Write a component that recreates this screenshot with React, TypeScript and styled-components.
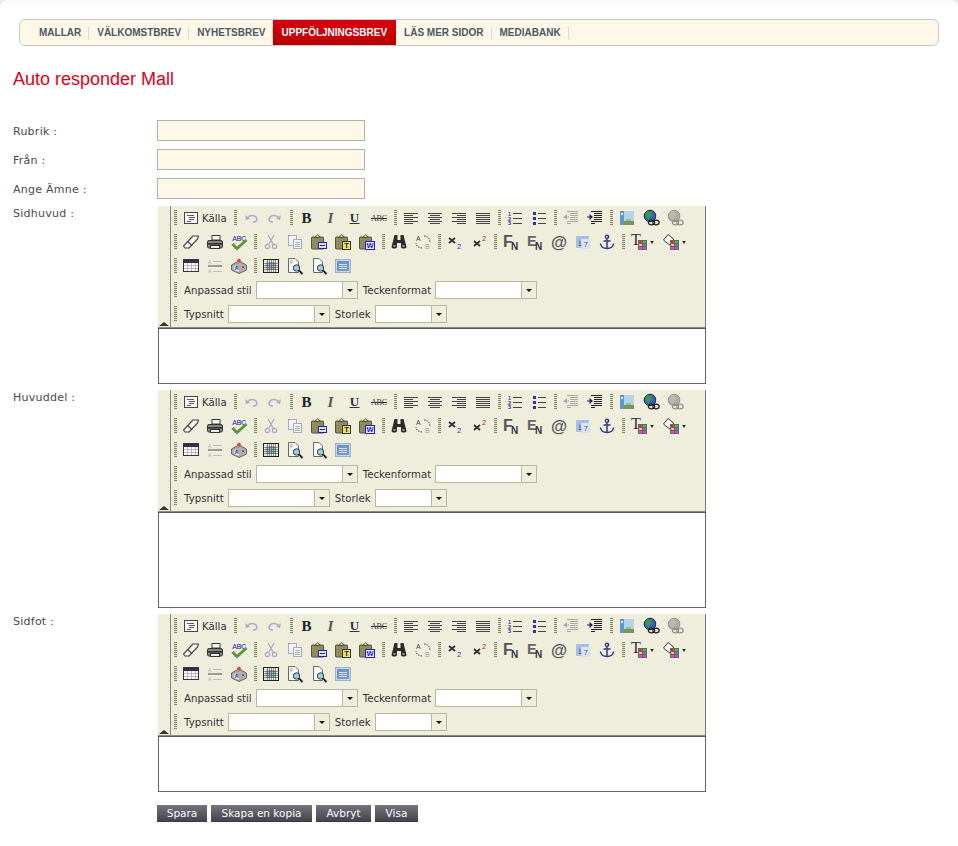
import React from "react";
import styled, { createGlobalStyle } from "styled-components";

const Global = createGlobalStyle`
  html { background: #e6e6e6; }
  body { margin: 0; font-family: "DejaVu Sans", Verdana, sans-serif; }
`;

const Page = styled.div`
  min-height: 846px;
  box-sizing: border-box;
  padding: 19px 19px 0 0;
  border-radius: 6px 6px 0 0;
  background: linear-gradient(#f9f9f9 0, #fbfbfb 5px, #fff 7px);
`;
const Nav = styled.nav`
  margin-left: 19px;
  height: 27px;
  box-sizing: border-box;
  display: flex;
  align-items: stretch;
  padding-left: 11px;
  background: #fff7e8;
  border: 1px solid #c3cbc9;
  border-radius: 6px;
`;
const Tab = styled.a<{ $active?: boolean }>`
  display: flex;
  align-items: center;
  padding: ${(p) => (p.$active ? "0 9px 0 8px" : "0 7px 0 8px")};
  font: bold 10px/25px "Liberation Sans", Arial, sans-serif;
  color: ${(p) => (p.$active ? "#fff" : "#4b5866")};
  background: ${(p) => (p.$active ? "linear-gradient(#d80012, #b80000)" : "transparent")};
`;
const NavSep = styled.span`
  align-self: center;
  width: 1px;
  height: 12px;
  background: #d9d9cf;
`;
const Title = styled.h1`
  margin: 23px 0 30px 13px;
  font: normal 18px/21px "Liberation Sans", Arial, sans-serif;
  color: #e2001a;
`;
const Form = styled.div`
  display: grid;
  grid-template-columns: 144px 1fr;
  margin-left: 13px;
  width: 693px;
`;
const Label = styled.label<{ $top?: boolean; $mb: number }>`
  font-size: 11px;
  line-height: 21px;
  letter-spacing: 0.25px;
  color: #4a4a4a;
  margin-bottom: ${(p) => p.$mb}px;
  margin-top: ${(p) => (p.$top ? -3 : 1)}px;
`;
const Field = styled.div<{ $mb: number }>`
  margin-bottom: ${(p) => p.$mb}px;
  min-width: 0;
`;
const TextInput = styled.input`
  display: block;
  box-sizing: border-box;
  width: 208px;
  height: 21px;
  padding: 0 3px;
  background: #fff7e8;
  border: 1px solid #b4afa8;
  outline: none;
`;
const Editor = styled.div`
  margin-left: 1px;
  width: 548px;
`;
const ToolArea = styled.div`
  display: flex;
  height: 122px;
  box-sizing: border-box;
  background: #efeedd;
  border-right: 1px solid #777;
  border-bottom: 1px solid #8a8a80;
`;
const Collapser = styled.div`
  flex: none;
  width: 12px;
  margin-right: 1px;
  box-shadow: 1px 0 0 #85857c;
  display: flex;
  align-items: flex-end;
  justify-content: center;
  padding-bottom: 1px;
`;
const Triangle = styled.span`
  width: 0;
  height: 0;
  border-left: 5px solid transparent;
  border-right: 5px solid transparent;
  border-bottom: 4px solid #333;
`;
const Rows = styled.div`
  flex: 1;
  min-width: 0;
`;
const ToolRow = styled.div`
  display: flex;
  align-items: center;
  height: 24px;
`;
const Grip = styled.span`
  flex: none;
  width: 8px;
  height: 16px;
  display: flex;
  justify-content: center;
  &::before {
    content: "";
    width: 3px;
    height: 16px;
    background: repeating-linear-gradient(to bottom, #8b8a6c 0 1px, #e3e2c8 1px 2px);
  }
`;
const ToolButton = styled.span`
  flex: none;
  width: 24px;
  height: 24px;
  display: flex;
  align-items: center;
  justify-content: center;
  box-sizing: border-box;
`;
const SourceButton = styled.span`
  flex: none;
  width: 52px;
  height: 24px;
  display: flex;
  align-items: center;
  gap: 3px;
  padding-left: 4px;
  box-sizing: border-box;
  font-size: 10.2px;
  color: #333;
`;
const ComboButton = styled.span`
  flex: none;
  width: 32px;
  height: 24px;
  display: flex;
  align-items: center;
  padding-left: 4px;
  gap: 3px;
  box-sizing: border-box;
`;
const SmallArrow = styled.span`
  width: 0;
  height: 0;
  border-left: 2.5px solid transparent;
  border-right: 2.5px solid transparent;
  border-top: 3px solid #333;
`;
const ComboLabel = styled.span`
  flex: none;
  font-size: 10.2px;
  color: #333;
  padding: 0 4px 0 5px;
`;
const Select = styled.span<{ $w: number }>`
  flex: none;
  width: ${(p) => p.$w}px;
  height: 18px;
  box-sizing: border-box;
  display: flex;
  background: #fff;
  border: 1px solid #b8b7a0;
`;
const SelectValue = styled.span`
  flex: 1;
`;
const SelectArrow = styled.span`
  flex: none;
  width: 14px;
  background: #efeedd;
  border-left: 1px solid #b8b7a0;
  display: flex;
  align-items: center;
  justify-content: center;
  &::before {
    content: "";
    border-left: 3px solid transparent;
    border-right: 3px solid transparent;
    border-top: 3px solid #111;
  }
`;
const Content = styled.div<{ $h: number }>`
  height: ${(p) => p.$h}px;
  box-sizing: border-box;
  background: #fff;
  border: 1px solid #666;
  border-top-color: #555;
`;
const Actions = styled.div`
  display: flex;
  margin-top: 7px;
  grid-column: 2;
`;
const ActionButton = styled.button<{ $w: number; $mr: number }>`
  width: ${(p) => p.$w}px;
  margin-right: ${(p) => p.$mr}px;
  height: 17px;
  padding: 0;
  border: 0;
  border-bottom: 1px solid #3a3a40;
  background: linear-gradient(#74747e, #45454d);
  font: 10.5px/16px "DejaVu Sans", Verdana, sans-serif;
  color: #fafafa;
`;
const IconSvg = styled.svg`
  display: block;
  flex: none;
  overflow: visible;
`;

const TXT = { fontFamily: "Liberation Serif, serif" };
const SANS = { fontFamily: "Liberation Sans, sans-serif" };
const lines = (rows: [number, number, number][], c = "#444") =>
  rows.map(([x1, x2, y], i) => <line key={i} x1={x1} x2={x2} y1={y + 0.5} y2={y + 0.5} stroke={c} />);
const alignRows = (f: (i: number) => [number, number]) =>
  lines(
    Array.from({ length: 6 }, (_, i) => {
      const [a, b] = f(i);
      return [a, b, 3 + i * 2] as [number, number, number];
    }),
  );
const Palette = () => (
  <g shapeRendering="crispEdges">
    <rect x="7" y="6" width="9" height="10" fill="#666" />
    <rect x="8" y="7" width="3" height="2" fill="#e33" />
    <rect x="12" y="7" width="3" height="2" fill="#4b4" />
    <rect x="8" y="10" width="3" height="2" fill="#ec3" />
    <rect x="12" y="10" width="3" height="2" fill="#48d" />
    <rect x="8" y="13" width="3" height="2" fill="#e4c" />
    <rect x="12" y="13" width="3" height="2" fill="#d4d" />
  </g>
);
const Magnifier = () => (
  <g>
    <circle cx="9.5" cy="10" r="3.2" fill="#9fd0d8" stroke="#334" />
    <line x1="11.8" y1="12.2" x2="15.5" y2="16" stroke="#222" strokeWidth="1.8" />
  </g>
);
const Clipboard = () => (
  <g>
    <rect x="0.5" y="3" width="12" height="12" rx="1" fill="#8f8b5e" stroke="#55523a" />
    <path d="M3.5 3.5 L6.5 0.8 L9.5 3.5 Z" fill="#e8d870" stroke="#55523a" />
  </g>
);
const Globe = () => (
  <g>
    <circle cx="7" cy="6" r="5.8" fill="#2f62c8" stroke="#224" />
    <path d="M4 1.5 L8 1.5 L9 5 L6 8 L7 11 L4 8 L2 5 Z" fill="#3c9a3c" />
    <ellipse cx="8.5" cy="12.5" rx="3.2" ry="2.4" fill="none" stroke="#222" strokeWidth="1.2" />
    <ellipse cx="13" cy="12.5" rx="3.2" ry="2.4" fill="none" stroke="#222" strokeWidth="1.2" />
  </g>
);

const icons: Record<string, React.ReactNode> = {
  source: (
    <g shapeRendering="crispEdges">
      <rect x="1.5" y="2.5" width="13" height="11" fill="#fdfdf8" stroke="#444" />
      {lines([[4, 11, 5], [6, 12, 7], [6, 11, 9], [4, 8, 11]], "#555")}
    </g>
  ),
  undo: (
    <g fill="none" stroke="#a9afc6" strokeWidth="1.5">
      <path d="M4 8 C7 4 13 5 14 9 C14 11 12 12 10 12" />
      <path d="M2 5 L3 10 L7 9 Z" fill="#a9afc6" stroke="none" />
    </g>
  ),
  redo: (
    <g fill="none" stroke="#a9afc6" strokeWidth="1.5" transform="matrix(-1 0 0 1 16 0)">
      <path d="M4 8 C7 4 13 5 14 9 C14 11 12 12 10 12" />
      <path d="M2 5 L3 10 L7 9 Z" fill="#a9afc6" stroke="none" />
    </g>
  ),
  bold: <text x="7.5" y="13" textAnchor="middle" fontSize="15" fontWeight="bold" fill="#222" style={TXT}>B</text>,
  italic: <text x="7.5" y="13" textAnchor="middle" fontSize="15" fontWeight="bold" fontStyle="italic" fill="#555" style={TXT}>I</text>,
  underline: (
    <g>
      <text x="7.5" y="12" textAnchor="middle" fontSize="13" fontWeight="bold" fill="#333" style={TXT}>U</text>
      <rect x="2.5" y="13" width="10" height="1" fill="#333" />
    </g>
  ),
  strike: (
    <g>
      <text x="8" y="11" textAnchor="middle" fontSize="8" fill="#333" style={TXT} textLength="16">ABC</text>
      <rect x="0" y="8" width="16" height="1" fill="#333" />
    </g>
  ),
  left: <g shapeRendering="crispEdges">{alignRows((i) => [1, i % 2 ? 10 : 15])}</g>,
  center: <g shapeRendering="crispEdges">{alignRows((i) => (i % 2 ? [3, 13] : [1, 15]))}</g>,
  right: <g shapeRendering="crispEdges">{alignRows((i) => [i % 2 ? 6 : 1, 15])}</g>,
  justify: <g shapeRendering="crispEdges">{alignRows(() => [1, 15])}</g>,
  ol: (
    <g>
      <g fontSize="5.5" fill="#33a" fontWeight="bold" style={SANS}>
        <text x="1" y="6">1</text>
        <text x="1" y="10.5">2</text>
        <text x="1" y="15">3</text>
      </g>
      <g shapeRendering="crispEdges">{lines([[6, 15, 3], [6, 15, 8], [6, 15, 13]])}</g>
    </g>
  ),
  ul: (
    <g shapeRendering="crispEdges">
      <rect x="2" y="2" width="3" height="3" fill="#339" />
      <rect x="2" y="7" width="3" height="3" fill="#339" />
      <rect x="2" y="12" width="3" height="3" fill="#339" />
      {lines([[7, 15, 3], [7, 15, 8], [7, 15, 13]])}
    </g>
  ),
  outdent: (
    <g>
      <path d="M0 7 L4 4 L4 10 Z" fill="#a4aec8" />
      <rect x="3" y="6.5" width="3" height="1" fill="#a4aec8" />
      <g shapeRendering="crispEdges">
        {lines([[4, 15, 1], [7, 15, 3], [7, 15, 5], [7, 15, 7], [7, 15, 9], [4, 15, 11], [4, 8, 13]], "#aaa99a")}
      </g>
    </g>
  ),
  indent: (
    <g>
      <path d="M6 7 L2.5 4 L2.5 10 Z" fill="#226" />
      <rect x="0" y="6.5" width="4" height="1" fill="#226" />
      <g shapeRendering="crispEdges">
        {lines([[4, 15, 1], [7, 15, 3], [7, 15, 5], [7, 15, 7], [7, 15, 9], [4, 15, 11], [4, 8, 13]], "#222")}
      </g>
    </g>
  ),
  image: (
    <g shapeRendering="crispEdges">
      <rect x="1" y="1" width="14" height="14" fill="#b5d3e8" />
      <rect x="1" y="1" width="4" height="14" fill="#5e97c8" />
      <rect x="5" y="11" width="10" height="4" fill="#6e9a5a" />
      <rect x="7" y="9" width="5" height="2" fill="#9abb88" />
      <rect x="2" y="3" width="2" height="2" fill="#eef4f8" />
    </g>
  ),
  globe: <Globe />,
  globeGray: <g opacity="0.45" style={{ filter: "grayscale(1)" }}><Globe /></g>,
  eraser: (
    <g stroke="#444" strokeWidth="1.1" strokeLinejoin="round">
      <path d="M0.5 12 L10 2 L15.5 2 L14.5 5 L6 14 L2 14 Z" fill="#fbfbf5" />
      <path d="M5 8 L9 11.5" fill="none" />
    </g>
  ),
  print: (
    <g stroke="#333">
      <path d="M5 1.5 L13 1.5 L13 6 L5 6 Z" fill="#fff" />
      <rect x="0.5" y="6.5" width="15" height="7.5" rx="1.5" fill="#88887c" />
      <rect x="0" y="9" width="16" height="1.6" fill="#333" stroke="none" />
      <rect x="3.5" y="11.5" width="9" height="3" fill="#eee" />
    </g>
  ),
  spell: (
    <g>
      <text x="8" y="6.5" textAnchor="middle" fontSize="7" fontWeight="bold" fill="#5560b8" style={SANS} textLength="14">ABC</text>
      <path d="M1.5 10 L6 14.5 L15.5 6" fill="none" stroke="#5c9640" strokeWidth="3" />
    </g>
  ),
  cut: (
    <g stroke="#a5abc6" fill="none" strokeWidth="1.2">
      <path d="M5 1 L10 10 M11 1 L6 10" />
      <circle cx="4.5" cy="12.5" r="2.2" />
      <circle cx="11.5" cy="12.5" r="2.2" />
    </g>
  ),
  copy: (
    <g stroke="#a8aac0" fill="#f4f4f0">
      <rect x="1.5" y="1.5" width="8" height="10" />
      <rect x="6.5" y="5.5" width="8" height="9" />
      {lines([[8, 13, 8], [8, 13, 10], [8, 13, 12]], "#a8aac0")}
    </g>
  ),
  paste: (
    <g>
      <Clipboard />
      <rect x="7.5" y="8.5" width="8" height="6" fill="#dfe3f8" stroke="#2222bb" />
      {lines([[9, 14, 11]], "#2222bb")}
    </g>
  ),
  pasteText: (
    <g>
      <Clipboard />
      <rect x="7.5" y="7.5" width="8" height="8" fill="#f4e25a" stroke="#333" />
      <text x="11.5" y="14" textAnchor="middle" fontSize="7.5" fontWeight="bold" fill="#222" style={SANS}>T</text>
    </g>
  ),
  pasteWord: (
    <g>
      <Clipboard />
      <rect x="6.5" y="7.5" width="9" height="8" fill="#e8ecff" stroke="#2222cc" />
      <text x="11" y="14" textAnchor="middle" fontSize="7.5" fontWeight="bold" fill="#2222cc" style={SANS}>W</text>
    </g>
  ),
  find: (
    <g fill="#2d2a2a">
      <path d="M3.5 1 H6.5 V6 H9.5 V1 H12.5 L15.5 13 C15.5 15 10 15 10 13 V9 H6 V13 C6 15 0.5 15 0.5 13 Z" />
      <rect x="2.5" y="11" width="2" height="2" fill="#9a9a90" />
      <rect x="11.5" y="11" width="2" height="2" fill="#9a9a90" />
    </g>
  ),
  replace: (
    <g>
      <text x="1" y="7" fontSize="7" fill="#444" style={SANS}>A</text>
      <text x="10" y="15" fontSize="7" fill="#999" style={SANS}>B</text>
      <path d="M9 2 C13 2 15 5 15 8 M7 14 C3 14 1 11 1 9" fill="none" stroke="#333" strokeDasharray="1.4 1.2" />
    </g>
  ),
  sub: (
    <g>
      <path d="M2 4 L8 9 M8 4 L2 9" stroke="#333" strokeWidth="1.8" />
      <text x="10" y="14.5" fontSize="7.5" fill="#33b" style={SANS}>2</text>
    </g>
  ),
  sup: (
    <g>
      <path d="M3 7 L9 12 M9 7 L3 12" stroke="#333" strokeWidth="1.8" />
      <text x="11" y="7" fontSize="7.5" fill="#b23" style={SANS}>2</text>
    </g>
  ),
  fn: (
    <g fontWeight="bold" style={SANS}>
      <text x="0" y="13" fontSize="16" fill="#555">F</text>
      <text x="8" y="15.5" fontSize="10" fill="#333">N</text>
    </g>
  ),
  en: (
    <g fontWeight="bold" style={SANS}>
      <text x="0" y="11.5" fontSize="14.5" fill="#666">E</text>
      <text x="8" y="15.5" fontSize="10" fill="#333">N</text>
    </g>
  ),
  at: <text x="8" y="13.5" textAnchor="middle" fontSize="16.5" fontWeight="bold" fill="#555" style={SANS}>@</text>,
  calendar: (
    <g>
      <rect x="1" y="2" width="13" height="12" rx="1" fill="#a5c0e4" />
      <rect x="6" y="5" width="9" height="10" fill="#d8e4f4" />
      <text x="3" y="12" fontSize="7" fill="#445" style={SANS}>1</text>
      <text x="9" y="13" fontSize="7" fill="#445" style={SANS}>7</text>
    </g>
  ),
  anchor: (
    <g fill="none" stroke="#2f3a8e" strokeWidth="1.5">
      <circle cx="8" cy="2.8" r="1.6" />
      <path d="M8 4.5 V14.5 M4.5 7 H11.5 M1.5 9.5 C2 13 5 14.5 8 14.5 C11 14.5 14 13 14.5 9.5" />
    </g>
  ),
  textColor: (
    <g>
      <text x="0" y="11" fontSize="16" fill="#333" style={TXT}>T</text>
      <Palette />
    </g>
  ),
  bgColor: (
    <g>
      <path d="M0.5 6 L5 0.5 L10.5 5 L6.5 11 Z" fill="#fff" stroke="#333" />
      <Palette />
    </g>
  ),
  table: (
    <g shapeRendering="crispEdges">
      <rect x="0.5" y="1.5" width="15" height="12" fill="#fdfdf5" stroke="#334" />
      <rect x="0.5" y="1.5" width="15" height="3" fill="#2f2f48" />
      {lines([[1, 15, 7], [1, 15, 10]], "#b8b8c8")}
      {[4.5, 8.5, 12.5].map((x) => (
        <line key={x} x1={x} x2={x} y1="5" y2="13" stroke="#b8b8c8" />
      ))}
    </g>
  ),
  hr: (
    <g>
      <text x="1" y="6" fontSize="5" fill="#aaa" style={SANS}>A</text>
      <text x="1" y="15" fontSize="5" fill="#aaa" style={SANS}>A</text>
      <g shapeRendering="crispEdges">
        {lines([[6, 15, 3], [6, 15, 13]], "#bbb")}
        <rect x="1" y="7" width="14" height="2" fill="#9a9a90" />
      </g>
    </g>
  ),
  special: (
    <g>
      <path d="M0.5 7 L8 3 L15.5 7 L15.5 12 L8 15.5 L0.5 12 Z" fill="#b0aea4" stroke="#666" />
      <path d="M3 8 L8 10 L8 14 L3 12 Z" fill="#dde" />
      <circle cx="8" cy="2.8" r="2" fill="#d44" />
      <text x="3.5" y="12" fontSize="6" fill="#2244cc" fontWeight="bold" style={SANS}>A</text>
      <rect x="11" y="8" width="2" height="2" fill="#a3c" />
    </g>
  ),
  blocks: (
    <g shapeRendering="crispEdges">
      <rect x="0.5" y="1.5" width="15" height="13" fill="#e8e8d8" stroke="#222" />
      <rect x="3" y="4" width="10" height="8" fill="#9cc0b8" />
      {[4, 6, 8, 10, 12].map((x) => (
        <rect key={x} x={x} y="2" width="1" height="12" fill="#334" opacity="0.45" />
      ))}
      {[5, 7, 9, 11].map((y) => (
        <rect key={y} x="1" y={y} width="14" height="1" fill="#334" opacity="0.45" />
      ))}
    </g>
  ),
  preview: (
    <g>
      <path d="M1.5 0.5 H8 L11.5 4 V14.5 H1.5 Z" fill="#fff" stroke="#666" />
      <text x="3" y="6" fontSize="4.5" fill="#777" style={SANS}>P</text>
      <Magnifier />
    </g>
  ),
  print2: (
    <g>
      <path d="M2.5 0.5 H8 L11.5 4 V14.5 H2.5 Z" fill="#fff" stroke="#666" />
      <Magnifier />
    </g>
  ),
  maximize: (
    <g shapeRendering="crispEdges">
      <rect x="0.5" y="1.5" width="15" height="13" fill="#cdd8e6" stroke="#9fb2c8" />
      <rect x="2" y="3" width="12" height="10" fill="#6f93cc" />
      {lines([[4, 12, 6], [4, 12, 8], [4, 12, 10]], "#d8e2f0")}
    </g>
  ),
};

const Icon = ({ name }: { name: string }) => (
  <IconSvg width="16" height="16" viewBox="0 0 16 16" aria-hidden>
    {icons[name]}
  </IconSvg>
);

const Btn = ({ name }: { name: string }) => (
  <ToolButton>
    <Icon name={name} />
  </ToolButton>
);
const Group = ({ names }: { names: string[] }) => (
  <>
    <Grip />
    {names.map((n, i) => (
      <Btn key={n + i} name={n} />
    ))}
  </>
);
const Combo = ({ name }: { name: string }) => (
  <ComboButton>
    <Icon name={name} />
    <SmallArrow />
  </ComboButton>
);
const Dropdown = ({ w }: { w: number }) => (
  <Select $w={w}>
    <SelectValue />
    <SelectArrow />
  </Select>
);

const RichEditor = ({ height }: { height: number }) => (
  <Editor>
    <ToolArea>
      <Collapser>
        <Triangle />
      </Collapser>
      <Rows>
        <ToolRow>
          <Grip />
          <SourceButton>
            <Icon name="source" />
            Källa
          </SourceButton>
          <Group names={["undo", "redo"]} />
          <Group names={["bold", "italic", "underline", "strike"]} />
          <Group names={["left", "center", "right", "justify"]} />
          <Group names={["ol", "ul"]} />
          <Group names={["outdent", "indent"]} />
          <Group names={["image", "globe", "globeGray"]} />
        </ToolRow>
        <ToolRow>
          <Group names={["eraser", "print", "spell"]} />
          <Group names={["cut", "copy", "paste", "pasteText", "pasteWord"]} />
          <Group names={["find", "replace"]} />
          <Group names={["sub", "sup"]} />
          <Group names={["fn", "en", "at", "calendar", "anchor"]} />
          <Grip />
          <Combo name="textColor" />
          <Combo name="bgColor" />
        </ToolRow>
        <ToolRow>
          <Group names={["table", "hr", "special"]} />
          <Group names={["blocks", "preview", "print2", "maximize"]} />
        </ToolRow>
        <ToolRow>
          <Grip />
          <ComboLabel>Anpassad stil</ComboLabel>
          <Dropdown w={102} />
          <ComboLabel>Teckenformat</ComboLabel>
          <Dropdown w={102} />
        </ToolRow>
        <ToolRow>
          <Grip />
          <ComboLabel>Typsnitt</ComboLabel>
          <Dropdown w={102} />
          <ComboLabel>Storlek</ComboLabel>
          <Dropdown w={72} />
        </ToolRow>
      </Rows>
    </ToolArea>
    <Content $h={height} />
  </Editor>
);

const navItems = ["MALLAR", "VÄLKOMSTBREV", "NYHETSBREV", "UPPFÖLJNINGSBREV", "LÄS MER SIDOR", "MEDIABANK"];

export default function App() {
  return (
    <Page>
      <Global />
      <Nav>
        {navItems.map((t, i) => {
          const active = i === 3;
          return (
            <React.Fragment key={t}>
              <Tab $active={active}>{t}</Tab>
              {!active && <NavSep />}
            </React.Fragment>
          );
        })}
      </Nav>
      <Title>Auto responder Mall</Title>
      <Form>
        <Label $mb={7}>Rubrik :</Label>
        <Field $mb={8}>
          <TextInput />
        </Field>
        <Label $mb={7}>Från :</Label>
        <Field $mb={8}>
          <TextInput />
        </Field>
        <Label $mb={6}>Ange Ämne :</Label>
        <Field $mb={7}>
          <TextInput />
        </Field>
        <Label $top $mb={6}>Sidhuvud :</Label>
        <Field $mb={6}>
          <RichEditor height={56} />
        </Field>
        <Label $top $mb={6}>Huvuddel :</Label>
        <Field $mb={6}>
          <RichEditor height={96} />
        </Field>
        <Label $top $mb={6}>Sidfot :</Label>
        <Field $mb={6}>
          <RichEditor height={56} />
        </Field>
        <Actions>
          <ActionButton $w={50} $mr={4}>Spara</ActionButton>
          <ActionButton $w={101} $mr={4}>Skapa en kopia</ActionButton>
          <ActionButton $w={55} $mr={4}>Avbryt</ActionButton>
          <ActionButton $w={43} $mr={0}>Visa</ActionButton>
        </Actions>
      </Form>
    </Page>
  );
}
